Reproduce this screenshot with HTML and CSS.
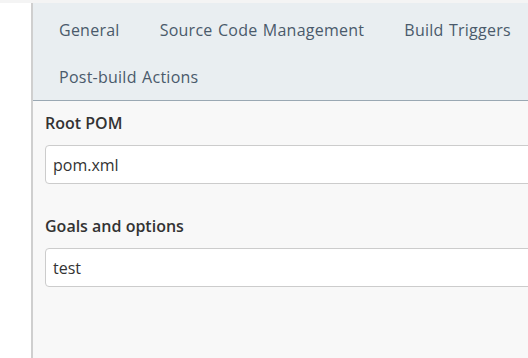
FILE: index.html
```html
<!DOCTYPE html>
<html>
<head>
<meta charset="utf-8">
<link rel="stylesheet" href="styles.css">
</head>
<body>
<div class="topstrip"></div>
<div class="layout">
  <div class="side"></div>
  <div class="main">
    <nav class="tabs">
      <span class="tab">General</span>
      <span class="tab">Source Code Management</span>
      <span class="tab">Build Triggers</span>
      <span class="tab">Post-build Actions</span>
    </nav>
    <div class="content">
      <div class="field">
        <div class="label">Root POM</div>
        <div class="input">pom.xml</div>
      </div>
      <div class="field">
        <div class="label">Goals and options</div>
        <div class="input">test</div>
      </div>
    </div>
  </div>
</div>
</body>
</html>
```
FILE: styles.css
```css
html, body {
  margin: 0;
  padding: 0;
  height: 100%;
  overflow: hidden;
  background: #ffffff;
  font-family: "Open Sans", "Noto Sans", sans-serif;
}
.topstrip {
  height: 3px;
  background: #f4f4f4;
}
.layout {
  display: flex;
  height: 355px;
}
.side {
  width: 31px;
  flex: none;
  background: #ffffff;
}
.main {
  flex: 1;
  min-width: 0;
  overflow: hidden;
  border-left: 2px solid #cfcfcf;
  background: #f8f8f8;
}
.tabs {
  display: flex;
  flex-wrap: wrap;
  background: #e9eef1;
  border-bottom: 1px solid #9aa8b3;
  padding: 3px 0 0 6px;
  width: 560px;
}
.tab {
  padding: 0 20px;
  height: 47px;
  line-height: 48px;
  font-size: 16px;
  letter-spacing: 0.25px;
  word-spacing: 1px;
  color: #4a5a6b;
  white-space: nowrap;
}
.content {
  padding: 10px 0 0 12px;
  width: 560px;
}
.field {
  margin-bottom: 30px;
}
.label {
  font-size: 16px;
  font-weight: 600;
  color: #333333;
  line-height: 24px;
  margin-bottom: 10px;
}
.input {
  height: 39px;
  box-sizing: border-box;
  border: 1px solid #cccccc;
  border-radius: 4px;
  background: #ffffff;
  padding: 2px 12px 0 7px;
  line-height: 35px;
  font-size: 16px;
  color: #333333;
}
```
